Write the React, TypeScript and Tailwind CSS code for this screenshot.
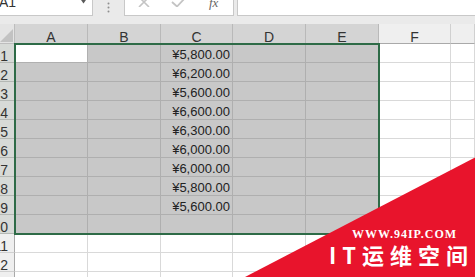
import React from 'react';

const values: (string | null)[] = [
  '¥5,800.00',
  '¥6,200.00',
  '¥5,600.00',
  '¥6,600.00',
  '¥6,300.00',
  '¥6,000.00',
  '¥6,000.00',
  '¥5,800.00',
  '¥5,600.00',
  null,
];

const colLetters = ['A', 'B', 'C', 'D', 'E', 'F', ''];
const rowNums = Array.from({ length: 13 }, (_, i) => i + 1);

function HeaderCell({ letter, sel }: { letter: string; sel: boolean }) {
  return (
    <div
      className={
        sel
          ? 'flex items-end justify-center overflow-hidden border-r border-b border-r-[#b9b9b9] border-b-[#2e6b47] bg-[#d4d4d4] text-[14px] leading-[12px] text-[#333]'
          : 'flex items-end justify-center overflow-hidden border-r border-b border-r-[#d0d0d0] border-b-[#a9a9a9] bg-[#efefef] text-[14px] leading-[12px] text-[#333]'
      }
    >
      {letter}
    </div>
  );
}

function RowHeader({ n }: { n: number }) {
  const sel = n <= 10;
  return (
    <div
      className={
        sel
          ? 'flex items-end justify-end overflow-hidden whitespace-nowrap border-r border-b border-r-[#2e6b47] border-b-[#b4b8b4] bg-[#d7dad7] pr-[6px] text-[14px] leading-[12px] text-[#333]'
          : 'flex items-end justify-end overflow-hidden whitespace-nowrap border-r border-b border-r-[#a9a9a9] border-b-[#d0d0d0] bg-[#efefef] pr-[6px] text-[14px] leading-[12px] text-[#333]'
      }
    >
      {n}
    </div>
  );
}

function Cell({ row, col }: { row: number; col: number }) {
  const sel = row <= 10 && col < 5;
  const active = row === 1 && col === 0;
  const text = col === 2 && row <= 10 ? values[row - 1] : null;
  let cls =
    'flex items-end justify-end overflow-hidden whitespace-nowrap border-r border-b pr-[2px] text-[13px] leading-[14px] text-[#222]';
  if (active) cls += ' bg-white border-[#b0b0b0]';
  else if (sel) cls += ' bg-[#c8c8c8] border-[#afafaf]';
  else cls += ' bg-white border-[#d9d9d9]';
  return <div className={cls}>{text}</div>;
}

export default function App() {
  return (
    <div className="relative h-[277px] w-[475px] overflow-hidden bg-[#eaeaea] font-['Liberation_Sans',Arial,sans-serif]">
      {/* Formula bar */}
      <div className="flex h-[16px]">
        <div className="flex w-[93px] justify-between overflow-hidden border-r border-b border-[#c8c8c8] bg-white">
          <span className="-mt-[5px] -ml-[1px] text-[14px] leading-[14px] text-[#333]">A1</span>
          <svg width="9" height="4" className="mr-[4px]" viewBox="0 0 9 4">
            <path d="M0 -3 L9 -3 L4.5 3.5 Z" fill="#5a5a5a" />
          </svg>
        </div>
        <div className="flex w-[31px] justify-center pt-[2px]">
          <svg width="3" height="12" viewBox="0 0 3 12">
            <circle cx="1.5" cy="1.5" r="1" fill="#8f8f8f" />
            <circle cx="1.5" cy="5.5" r="1" fill="#8f8f8f" />
            <circle cx="1.5" cy="9.5" r="1" fill="#8f8f8f" />
          </svg>
        </div>
        <div className="flex w-[110px] overflow-hidden border-x border-b border-[#c8c8c8] bg-white">
          <svg width="12" height="10" viewBox="0 0 12 10" className="mt-[-3px] ml-[13px]">
            <path d="M1 0 L11 10 M11 0 L1 10" stroke="#c4c4c4" strokeWidth="1.6" />
          </svg>
          <svg width="16" height="10" viewBox="0 0 16 10" className="mt-[-3px] ml-[21px]">
            <path d="M1 5 L6 9.5 L15 0" stroke="#c4c4c4" strokeWidth="1.8" fill="none" />
          </svg>
          <span className="ml-[22px] mt-[-4px] font-['Liberation_Serif',serif] text-[13px] italic leading-[13px] text-[#666]">
            fx
          </span>
        </div>
        <div className="w-[3px]" />
        <div className="flex-1 border-l border-b border-[#c8c8c8] bg-white" />
      </div>

      <div className="h-[8px]" />

      {/* Sheet grid */}
      <div className="grid grid-cols-[15px_73px_73px_72px_73px_73px_72px_24px] grid-rows-[20px_repeat(13,19px)]">
        <div className="flex items-end justify-end border-r border-b border-[#bdbdbd] bg-[#e4e4e4] pr-[1px] pb-[1px]">
          <svg width="13" height="13" viewBox="0 0 13 13">
            <path d="M13 0 L13 13 L0 13 Z" fill="#c2c2c2" />
          </svg>
        </div>
        {colLetters.map((l, i) => (
          <HeaderCell key={i} letter={l} sel={i < 5} />
        ))}
        {rowNums.map((r) => (
          <React.Fragment key={r}>
            <RowHeader n={r} />
            {colLetters.map((_, c) => (
              <Cell key={c} row={r} col={c} />
            ))}
          </React.Fragment>
        ))}
      </div>

      {/* Selection border */}
      <div className="absolute top-[43px] left-[14px] h-[192px] w-[366px] border-2 border-[#2e6b47]" />

      {/* Watermark */}
      <svg className="absolute inset-0" width="475" height="277" viewBox="0 0 475 277">
        <polygon points="245,277 475,157.5 475,277" fill="#e8142c" />
      </svg>
      <div className="absolute top-[229px] left-[352px] font-['Liberation_Serif',serif] text-[12px] font-bold leading-[10px] tracking-[1px] whitespace-nowrap text-white">
        WWW.94IP.COM
      </div>
      <div className="absolute top-[240px] left-[329px] font-['Noto_Sans_CJK_SC',sans-serif] text-[22px] font-bold leading-[28px] tracking-[6px] whitespace-nowrap text-white">
        IT运维空间
      </div>
    </div>
  );
}
